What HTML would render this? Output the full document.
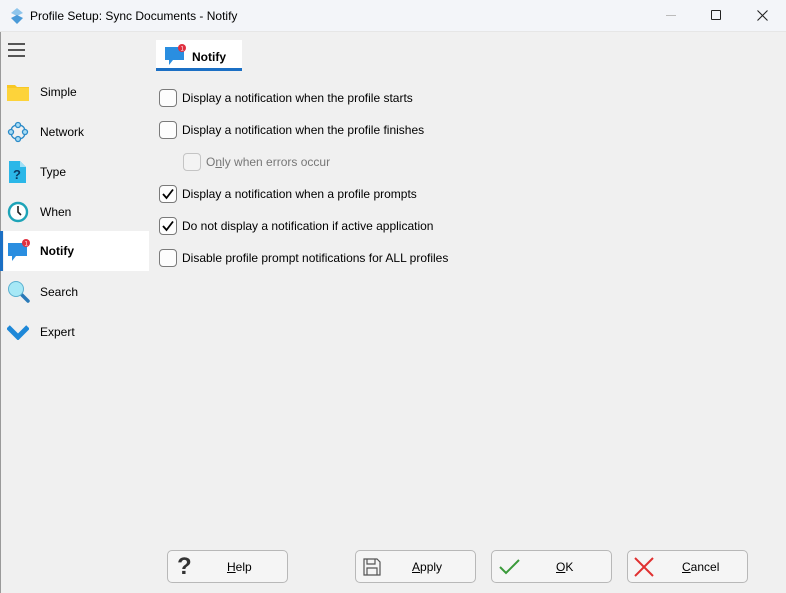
<!DOCTYPE html>
<html><head><style>
*{box-sizing:border-box;margin:0;padding:0}
body{width:786px;height:593px;background:#f0f0f0;font-family:"Liberation Sans",sans-serif;font-size:12px;color:#000;position:relative;overflow:hidden}
.title{position:absolute;left:0;top:0;width:786px;height:32px;background:#f3f5f9;border-bottom:1px solid #e6e6e6}
.abs{position:absolute}
.nav{position:absolute;left:0;width:149px;height:40px;display:flex;align-items:center}
.nav span{position:absolute;left:40px;top:13px}
.sel{background:#fff}
.cb{position:absolute;left:159px;width:18px;height:18px;border:1px solid #7a7a7a;border-radius:4px;background:#fdfdfd}
.lbl{position:absolute;left:182px}
.btn{position:absolute;top:550px;height:33px;border:1px solid #b8b8b8;border-radius:5px;background:#f5f5f5;font-size:12px}
.btn span{position:absolute;top:9px}
</style></head><body>
<div class="title">
 <svg class="abs" style="left:9px;top:7px" width="16" height="18" viewBox="0 0 16 18"><path d="M8 1 L14 6 L8 9 L2 6Z" fill="#8ec5ec"/><path d="M2 11 L8 8 L14 11 L8 17Z" fill="#4a9ad8"/></svg>
 <div class="abs" style="left:30px;top:9px;font-size:12px">Profile Setup: Sync Documents - Notify</div>
 <div class="abs" style="left:666px;top:15px;width:10px;height:1px;background:#bbb"></div>
 <div class="abs" style="left:711px;top:10px;width:10px;height:10px;border:1px solid #222;border-radius:1px"></div>
 <svg class="abs" style="left:757px;top:10px" width="11" height="11"><path d="M0.5 0.5L10.5 10.5M10.5 0.5L0.5 10.5" stroke="#222" stroke-width="1.1"/></svg>
</div>
<div class="abs" style="left:0;top:32px;width:1px;height:561px;background:#9a9a9a"></div>
<div class="abs" style="left:8px;top:43px;width:17px;height:2px;background:#555"></div>
<div class="abs" style="left:8px;top:49px;width:17px;height:2px;background:#555"></div>
<div class="abs" style="left:8px;top:55px;width:17px;height:2px;background:#555"></div>

<div class="nav" style="top:72px"><svg class="abs" style="left:7px" width="22" height="18"><path d="M0 2h8l2 2h12v14H0z" fill="#f8c824"/><path d="M0 5h22v13H0z" fill="#fdd33a"/></svg><span>Simple</span></div>
<div class="nav" style="top:112px"><svg class="abs" style="left:7px" width="22" height="22" viewBox="0 0 22 22" fill="#a9ddf5" stroke="#2a8ac8" stroke-width="1.3"><path d="M11 4 Q18 4 18 11 Q18 18 11 18 Q4 18 4 11 Q4 4 11 4" fill="none"/><circle cx="11" cy="4" r="2.5"/><circle cx="4" cy="11" r="2.5"/><circle cx="18" cy="11" r="2.5"/><circle cx="11" cy="18" r="2.5"/></svg><span>Network</span></div>
<div class="nav" style="top:152px"><svg class="abs" style="left:9px" width="17" height="22"><path d="M0 0h11l6 6v16H0z" fill="#2bb7e8"/><path d="M11 0v6h6" fill="#9fe0f7"/><text x="4" y="18" font-family="Liberation Sans" font-weight="bold" font-size="13" fill="#0a3c66">?</text></svg><span>Type</span></div>
<div class="nav" style="top:192px"><svg class="abs" style="left:7px" width="22" height="22"><circle cx="11" cy="11" r="9" fill="#fff" stroke="#1ea4b8" stroke-width="2.4"/><path d="M11 5v6l3 3" stroke="#222" stroke-width="1.6" fill="none"/></svg><span>When</span></div>
<div class="nav sel" style="top:231px;left:4px;width:145px"><div class="abs" style="left:-4px;top:0;width:3px;height:40px;background:#1b6fc4"></div><svg class="abs" style="left:3px;top:8px" width="26" height="26"><path d="M1 4h19v13H9l-4 5v-5H1z" fill="#2a8ee0"/><circle cx="19" cy="4" r="4" fill="#e03040"/><text x="17.5" y="6.5" font-size="6" fill="#fff" font-family="Liberation Sans">1</text></svg><span style="left:36px;font-weight:bold">Notify</span></div>
<div class="nav" style="top:272px"><svg class="abs" style="left:7px" width="24" height="24"><path d="M15 15l6 6" stroke="#2a7ab8" stroke-width="3.5" stroke-linecap="round"/><circle cx="9" cy="9" r="7.5" fill="#a6e8f6" stroke="#5ab0d0" stroke-width="1"/></svg><span>Search</span></div>
<div class="nav" style="top:312px"><svg class="abs" style="left:7px" width="22" height="16"><path d="M1 3l10 10 10-10" stroke="#1e88d8" stroke-width="5" fill="none"/></svg><span>Expert</span></div>

<div class="abs" style="left:156px;top:40px;width:86px;height:30px;background:#fff"></div>
<div class="abs" style="left:156px;top:68px;width:86px;height:3px;background:#1b6fc4"></div>
<svg class="abs" style="left:164px;top:43px" width="26" height="26"><path d="M1 4h19v13H9l-4 5v-5H1z" fill="#2a8ee0"/><circle cx="18" cy="5" r="4" fill="#e03040"/><text x="16.5" y="7.5" font-size="6" fill="#fff" font-family="Liberation Sans">1</text></svg>
<div class="abs" style="left:192px;top:50px;font-weight:bold;font-size:12px">Notify</div>

<div class="cb" style="top:89px"></div><div class="lbl" style="top:91px">Display a notification when the profile starts</div>
<div class="cb" style="top:121px"></div><div class="lbl" style="top:123px">Display a notification when the profile finishes</div>
<div class="cb" style="top:153px;left:183px;border-color:#c4c4c4;background:#f3f3f3"></div><div class="lbl" style="top:155px;left:206px;color:#777">O<u>n</u>ly when errors occur</div>
<div class="cb" style="top:185px"><svg width="16" height="16"><path d="M3 8l3.5 4L13 3.5" stroke="#000" stroke-width="1.8" fill="none"/></svg></div><div class="lbl" style="top:187px">Display a notification when a profile prompts</div>
<div class="cb" style="top:217px"><svg width="16" height="16"><path d="M3 8l3.5 4L13 3.5" stroke="#000" stroke-width="1.8" fill="none"/></svg></div><div class="lbl" style="top:219px">Do not display a notification if active application</div>
<div class="cb" style="top:249px"></div><div class="lbl" style="top:251px">Disable profile prompt notifications for ALL profiles</div>

<div class="btn" style="left:167px;width:121px"><div class="abs" style="left:9px;top:2px;font-size:24px;font-weight:bold;color:#333">?</div><span style="left:59px"><u>H</u>elp</span></div>
<div class="btn" style="left:355px;width:121px"><svg class="abs" style="left:7px;top:7px" width="18" height="18"><path d="M1 1h13l3 3v13H1z M4 1v5h8V1 M4 17v-7h10v7" fill="none" stroke="#555" stroke-width="1.2"/></svg><span style="left:56px"><u>A</u>pply</span></div>
<div class="btn" style="left:491px;width:121px"><svg class="abs" style="left:7px;top:8px" width="22" height="16"><path d="M1 8l6 6L20 1" stroke="#3a9a3a" stroke-width="2" fill="none"/></svg><span style="left:64px"><u>O</u>K</span></div>
<div class="btn" style="left:627px;width:121px"><svg class="abs" style="left:6px;top:6px" width="20" height="20"><path d="M1 1l18 18M19 1L1 19" stroke="#e03030" stroke-width="2"/></svg><span style="left:54px"><u>C</u>ancel</span></div>
</body></html>
